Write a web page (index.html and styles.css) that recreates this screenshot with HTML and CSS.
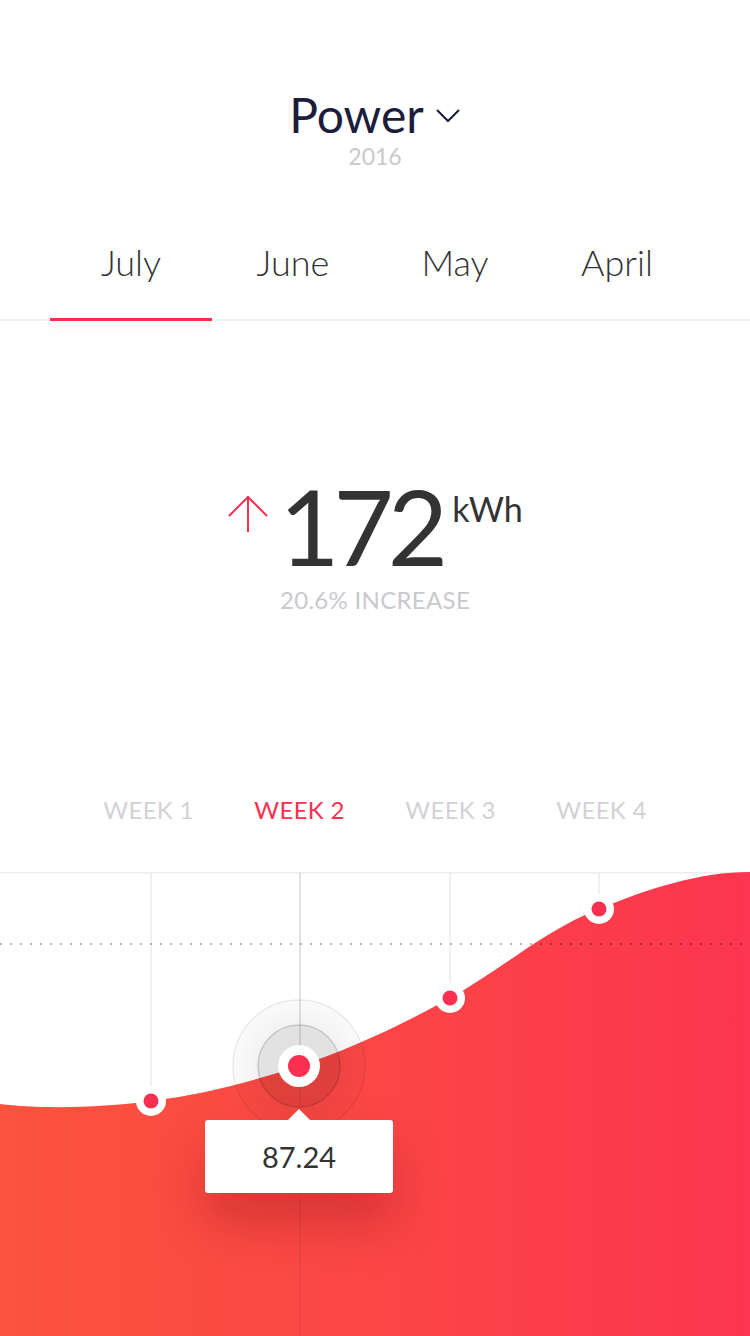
FILE: index.html
```html
<!DOCTYPE html>
<html lang="en">
<head>
    <meta charset="UTF-8">
    <meta name="viewport" content="width=device-width, initial-scale=1.0">
    <title>Power</title>
    <link rel="stylesheet" href="styles.css">
</head>
<body>

    <!-- Header -->
    <header class="top">
        <div class="title">
            <span>Power</span>
            <svg class="chevron" width="26" height="16" viewBox="0 0 26 16">
                <path d="M2 2 L13 13 L24 2" fill="none" stroke="#1c1d3b" stroke-width="2"/>
            </svg>
        </div>
        <div class="year">2016</div>
    </header>

    <!-- Months -->
    <nav class="months">
        <div class="tab active"><span>July</span><div class="bar"></div></div>
        <div class="tab"><span>June</span><div class="bar"></div></div>
        <div class="tab"><span>May</span><div class="bar"></div></div>
        <div class="tab"><span>April</span><div class="bar"></div></div>
    </nav>

    <!-- Total -->
    <section class="stat">
        <div class="stat-row">
            <svg class="arrow" width="42" height="40" viewBox="0 0 42 40">
                <path d="M21 3 L21 38 M2 22 L21 3 L40 22" fill="none" stroke="#fb3050" stroke-width="2"/>
            </svg>
            <span class="value">172</span>
            <span class="unit">kWh</span>
        </div>
        <div class="change">20.6% INCREASE</div>
    </section>

    <!-- Weeks -->
    <nav class="weeks">
        <span>WEEK 1</span>
        <span class="active">WEEK 2</span>
        <span>WEEK 3</span>
        <span>WEEK 4</span>
    </nav>

    <!-- Chart -->
    <section class="chart">
        <svg width="750" height="464" viewBox="0 0 750 464">
            <defs>
                <linearGradient id="fill" x1="0" y1="0" x2="1" y2="0">
                    <stop offset="0" stop-color="#fb533d"/>
                    <stop offset="0.5" stop-color="#fb4646"/>
                    <stop offset="1" stop-color="#fc3550"/>
                </linearGradient>
                <radialGradient id="halo">
                    <stop offset="0.5" stop-color="rgba(0,0,0,0.06)"/>
                    <stop offset="1" stop-color="rgba(0,0,0,0.02)"/>
                </radialGradient>
            </defs>
            <line x1="0" y1="0.5" x2="750" y2="0.5" stroke="#eeeeee" stroke-width="2"/>
            <line x1="151" y1="0" x2="151" y2="464" stroke="#ebebeb" stroke-width="1.5"/>
            <line x1="450" y1="0" x2="450" y2="464" stroke="#ebebeb" stroke-width="1.5"/>
            <line x1="599" y1="0" x2="599" y2="464" stroke="#ebebeb" stroke-width="1.5"/>
            <line x1="300" y1="0" x2="300" y2="464" stroke="#ebebeb" stroke-width="1.5"/>
            <path d="M0,232 C40,237 100,236 151,229 C205,222 250,210 299,194 C350,177 400,154 450,126 C505,95 545,58 599,37 C650,16 700,0 750,0 L750,464 L0,464 Z" fill="url(#fill)"/>
            <line x1="0" y1="72" x2="750" y2="72" stroke="rgba(0,0,0,0.28)" stroke-width="2" stroke-dasharray="2 8"/>
            <line x1="300" y1="0" x2="300" y2="464" stroke="rgba(0,0,0,0.07)" stroke-width="1.5"/>

            <circle cx="299" cy="194" r="66" fill="url(#halo)" stroke="rgba(0,0,0,0.08)" stroke-width="1.5"/>
            <circle cx="299" cy="194" r="41" fill="rgba(0,0,0,0.06)" stroke="rgba(0,0,0,0.16)" stroke-width="1.5"/>

            <circle cx="151" cy="229" r="15" fill="#ffffff"/>
            <circle cx="151" cy="229" r="7.5" fill="#fb3050"/>
            <circle cx="450" cy="126" r="15" fill="#ffffff"/>
            <circle cx="450" cy="126" r="7.5" fill="#fb3050"/>
            <circle cx="599" cy="37" r="15" fill="#ffffff"/>
            <circle cx="599" cy="37" r="7.5" fill="#fb3050"/>
            <circle cx="299" cy="194" r="21" fill="#ffffff"/>
            <circle cx="299" cy="194" r="11" fill="#fb3050"/>
        </svg>
        <div class="tooltip">87.24</div>
    </section>

</body>
</html>
```

FILE: styles.css
```css
html, body {
    margin: 0;
    padding: 0;
}

body {
    width: 750px;
    height: 1336px;
    overflow: hidden;
    background-color: #ffffff;
    font-family: Lato, "Noto Sans", sans-serif;
    color: #333333;
}

.top {
    padding-top: 86px;
    text-align: center;
}
.title {
    display: flex;
    justify-content: center;
    align-items: center;
    font-size: 48px;
    line-height: 58px;
    color: #1c1d3b;
}
.chevron {
    margin-left: 11px;
    margin-top: 2px;
}
.year {
    font-size: 23px;
    line-height: 24px;
    color: #c9c9cd;
}

.months {
    display: flex;
    padding: 72px 0 0 50px;
    border-bottom: 2px solid #f2f2f4;
}
.tab {
    width: 162px;
    display: flex;
    flex-direction: column;
    align-items: center;
    margin-bottom: -2px;
    font-size: 36px;
    font-weight: 300;
    line-height: 44px;
    color: #333333;
}
.tab .bar {
    align-self: stretch;
    height: 3px;
    margin-top: 34px;
}
.tab.active .bar {
    background-color: #fb3050;
    box-shadow: 0 6px 12px rgba(251, 48, 80, 0.12);
}

.stat {
    padding-top: 152px;
    text-align: center;
}
.stat-row {
    display: flex;
    justify-content: center;
    align-items: flex-start;
}
.arrow {
    margin-top: 21px;
    margin-right: 10px;
}
.value {
    font-size: 104px;
    line-height: 106px;
    letter-spacing: -6px;
    color: #333333;
}
.unit {
    margin-top: 18px;
    margin-left: 10px;
    font-size: 34px;
    line-height: 36px;
    color: #333333;
}
.change {
    margin-top: 8px;
    font-size: 24px;
    line-height: 26px;
    letter-spacing: 0.3px;
    color: #c9c9cd;
}

.weeks {
    display: grid;
    grid-template-columns: repeat(4, 151px);
    justify-content: center;
    padding: 183px 0 49px;
    font-size: 24px;
    line-height: 27px;
    letter-spacing: 0.3px;
    color: #d2d2d6;
    text-align: center;
}
.weeks .active {
    color: #fb3050;
}

.chart {
    position: relative;
    height: 464px;
}
.chart svg {
    display: block;
}
.tooltip {
    position: absolute;
    left: 205px;
    top: 248px;
    width: 188px;
    height: 73px;
    background-color: #ffffff;
    border-radius: 3px;
    box-shadow: 0 30px 50px rgba(130, 10, 20, 0.3);
    font-size: 29px;
    line-height: 73px;
    text-align: center;
    color: #333333;
}
.tooltip::before {
    content: "";
    position: absolute;
    top: -11px;
    left: 83px;
    border-left: 11px solid transparent;
    border-right: 11px solid transparent;
    border-bottom: 11px solid #ffffff;
}
```
